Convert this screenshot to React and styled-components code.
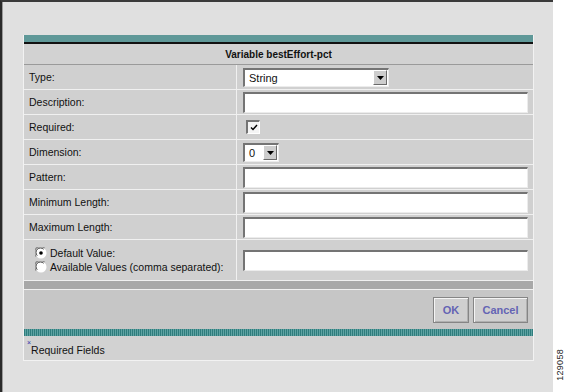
import React from 'react';
import styled, { createGlobalStyle } from 'styled-components';

const Global = createGlobalStyle`
  html, body { margin: 0; padding: 0; background: #fff; }
  body { font-family: "Liberation Sans", Arial, sans-serif; }
`;

const Screen = styled.div`
  display: flex;
  width: 566px;
  height: 392px;
  overflow: hidden;
`;

const Desktop = styled.div`
  width: 530px;
  height: 357px;
  background: #e0e0e0;
  border-top: 2px solid #3a3a3a;
  border-left: 2px solid #2a2a2a;
  box-shadow: inset 1px 0 0 #9a9a9a;
  padding: 33px 0 0 21px;
  box-sizing: content-box;
  flex-shrink: 0;
`;

const Margin = styled.div`
  flex: 1;
  display: flex;
  flex-direction: column;
  justify-content: flex-end;
  align-items: center;
  padding-bottom: 11px;
`;

const FigNumber = styled.span`
  writing-mode: vertical-rl;
  transform: rotate(180deg);
  font-size: 9px;
  color: #222;
  letter-spacing: 0.3px;
`;

const Panel = styled.div`
  width: 509px;
  border: 1px solid #f2f2f2;
  border-top: none;
  background: #d0d0d0;
  display: flex;
  flex-direction: column;
  font-size: 10.5px;
  color: #111;
`;

const TealBar = styled.div`
  height: 7px;
  background: #5f9898;
  border-bottom: 2px solid #111;
`;

const Title = styled.div`
  height: 20px;
  display: flex;
  align-items: center;
  justify-content: center;
  font-weight: bold;
  font-size: 10px;
  border-bottom: 1px solid #9a9a9a;
  background: #d2d2d2;
`;

const Grid = styled.div`
  display: grid;
  grid-template-columns: 213px 1fr;
`;

const Label = styled.div`
  height: ${p => p.tall ? 40 : 24}px;
  border-bottom: 1px solid #f0f0f0;
  border-right: 1px solid #f0f0f0;
  display: flex;
  flex-direction: column;
  justify-content: center;
  padding-left: ${p => p.tall ? 11 : 5}px;
  gap: 1px;
`;

const Value = styled.div`
  height: ${p => p.tall ? 40 : 24}px;
  border-bottom: 1px solid #f0f0f0;
  display: flex;
  align-items: center;
  padding: 0 5px 0 6px;
`;

const TextBox = styled.div`
  flex: 1;
  height: 18px;
  background: #fff;
  border-top: 2px solid #747474;
  border-left: 2px solid #747474;
  border-bottom: 1px solid #ececec;
  border-right: 1px solid #ececec;
`;

const Select = styled.div`
  width: ${p => p.w}px;
  height: 16px;
  background: #fff;
  border-top: 2px solid #747474;
  border-left: 2px solid #747474;
  border-bottom: 1px solid #ececec;
  border-right: 1px solid #ececec;
  display: flex;
  align-items: center;
  justify-content: space-between;
  font-size: 11px;
  padding-left: 4px;
`;

const Arrow = styled.div`
  width: 12px;
  height: 13px;
  margin-right: 1px;
  background: #cdcdcd;
  border-top: 1px solid #fff;
  border-left: 1px solid #fff;
  border-right: 1px solid #6a6a6a;
  border-bottom: 1px solid #6a6a6a;
  display: flex;
  align-items: center;
  justify-content: center;
`;

const Check = styled.div`
  width: 11px;
  height: 11px;
  margin-left: 3px;
  background: #f4f4f4;
  border-top: 2px solid #747474;
  border-left: 2px solid #747474;
  border-bottom: 1px solid #fff;
  border-right: 1px solid #fff;
  display: flex;
  align-items: center;
  justify-content: center;
`;

const Option = styled.div`
  display: flex;
  align-items: center;
  gap: 3px;
  height: 13px;
`;

const Spacer = styled.div`
  height: 8px;
  background: #a8a8a8;
  border-bottom: 1px solid #f0f0f0;
`;

const Actions = styled.div`
  height: 39px;
  background: #c6c6c6;
  display: flex;
  align-items: center;
  justify-content: flex-end;
  gap: 4px;
  padding-right: 5px;
`;

const Button = styled.div`
  width: ${p => p.w}px;
  height: 24px;
  box-sizing: content-box;
  border: 1px solid #858585;
  box-shadow: inset 1px 1px 0 #f4f4f4, inset -1px -1px 0 #b0b0b0;
  background: #cfcfcf;
  color: #6464b4;
  font-weight: bold;
  font-size: 11px;
  display: flex;
  align-items: center;
  justify-content: center;
`;

const Stripes = styled.div`
  height: 7px;
  background: repeating-linear-gradient(90deg, #2f7d7d 0 1px, #5fa3a3 1px 2px);
`;

const Footer = styled.div`
  height: 24px;
  display: flex;
  align-items: flex-start;
  padding: 3px 0 0 3px;
  box-sizing: border-box;
  background: #d2d2d2;
`;

const Star = styled.span`
  color: #3333aa;
  font-size: 7px;
  line-height: 7px;
`;

const FooterText = styled.span`
  margin-top: 5px;
`;

function DropArrow() {
  return (
    <Arrow>
      <svg width="7" height="4" viewBox="0 0 7 4"><path d="M0 0h7L3.5 4z" fill="#000" /></svg>
    </Arrow>
  );
}

function Radio({ on }) {
  return (
    <svg width="12" height="12" viewBox="0 0 12 12">
      <circle cx="6" cy="6" r="5.5" fill="#fff" />
      <path d="M1.2 9.5A5.5 5.5 0 0 1 9.5 1.2" stroke="#8a8a8a" strokeWidth="1.2" fill="none" />
      <path d="M2.3 8.6A4.2 4.2 0 0 1 8.6 2.3" stroke="#444" strokeWidth="1" fill="none" />
      {on && <circle cx="6" cy="6" r="1.8" fill="#000" />}
    </svg>
  );
}

const rows = [
  { label: 'Pattern:' },
  { label: 'Minimum Length:' },
  { label: 'Maximum Length:' },
];

export default function App() {
  return (
    <Screen>
      <Global />
      <Desktop>
        <Panel>
          <TealBar />
          <Title>Variable bestEffort-pct</Title>
          <Grid>
            <Label>Type:</Label>
            <Value>
              <Select w={139}>String<DropArrow /></Select>
            </Value>
            <Label>Description:</Label>
            <Value><TextBox /></Value>
            <Label>Required:</Label>
            <Value>
              <Check>
                <svg width="8" height="7" viewBox="0 0 8 7"><path d="M1 3.5l2 2L7 1" stroke="#000" strokeWidth="1.4" fill="none" /></svg>
              </Check>
            </Value>
            <Label>Dimension:</Label>
            <Value>
              <Select w={29}>0<DropArrow /></Select>
            </Value>
            {rows.map(r => (
              <React.Fragment key={r.label}>
                <Label>{r.label}</Label>
                <Value><TextBox /></Value>
              </React.Fragment>
            ))}
            <Label tall>
              <Option><Radio on />Default Value:</Option>
              <Option><Radio />Available Values (comma separated):</Option>
            </Label>
            <Value tall><TextBox /></Value>
          </Grid>
          <Spacer />
          <Actions>
            <Button w={34}>OK</Button>
            <Button w={53}>Cancel</Button>
          </Actions>
          <Stripes />
          <Footer>
            <Star>×</Star>
            <FooterText>Required Fields</FooterText>
          </Footer>
        </Panel>
      </Desktop>
      <Margin>
        <FigNumber>129058</FigNumber>
      </Margin>
    </Screen>
  );
}
